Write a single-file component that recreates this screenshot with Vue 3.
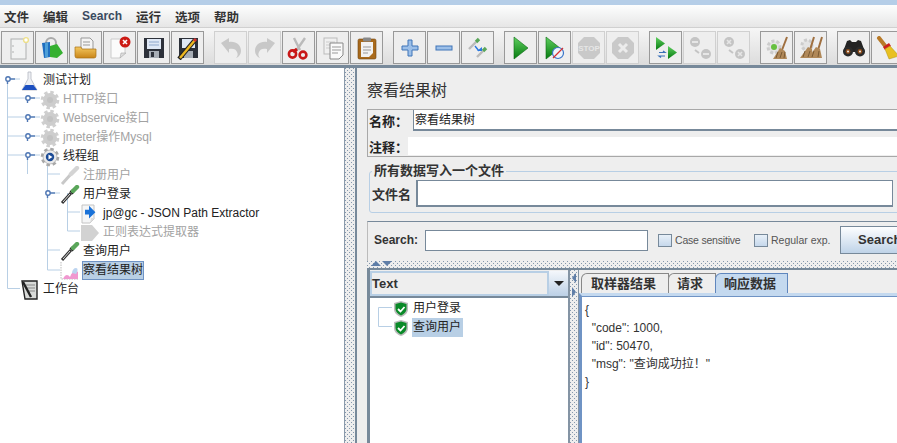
<script setup>
const menus = ['文件', '编辑', 'Search', '运行', '选项', '帮助']
const groups = [
  [['new'], ['templates'], ['open'], ['close'], ['save'], ['saveas']],
  [['undo', 1], ['redo', 1], ['cut'], ['copy'], ['paste']],
  [['plus'], ['minus'], ['toggle']],
  [['play'], ['playnt'], ['stop', 1], ['shut', 1]],
  [['rstart'], ['rstop', 1], ['rshut', 1]],
  [['clear'], ['clearall']],
  [['binoc'], ['broom']],
]
const rows = [
  { level: 0, icon: 'flask', text: '测试计划' },
  { level: 1, icon: 'gearoff', text: 'HTTP接口', off: true },
  { level: 1, icon: 'gearoff', text: 'Webservice接口', off: true },
  { level: 1, icon: 'gearoff', text: 'jmeter操作Mysql', off: true },
  { level: 1, icon: 'gear', text: '线程组' },
  { level: 2, icon: 'pipeoff', text: '注册用户', off: true },
  { level: 2, icon: 'pipe', text: '用户登录' },
  { level: 3, icon: 'extract', text: 'jp@gc - JSON Path Extractor' },
  { level: 3, icon: 'extoff', text: '正则表达式提取器', off: true },
  { level: 2, icon: 'pipe', text: '查询用户' },
  { level: 2, icon: 'graph', text: '察看结果树', sel: true },
  { level: 0, icon: 'bench', text: '工作台' },
]
const handles = [[8, 79], [28, 98], [28, 117], [28, 136], [28, 155], [48, 193]]
const lines = [
  'M7.5 79V288.5H20', 'M8 79H20',
  'M7.5 98H40', 'M7.5 117H40', 'M7.5 136H40', 'M7.5 155H40',
  'M27.5 155V174', 'M47.5 160V270H60', 'M47.5 174H60', 'M47.5 193H60', 'M47.5 250H60',
  'M67.5 193V231H80', 'M67.5 212H80',
]
</script>

<template>
  <div class="app">
    <svg class="defs" width="0" height="0">
      <defs>
        <linearGradient id="gGreen" x1="0" y1="0" x2="0" y2="1"><stop offset="0" stop-color="#5fd05f"/><stop offset="1" stop-color="#067a10"/></linearGradient>
        <linearGradient id="gFolder" x1="0" y1="0" x2="0" y2="1"><stop offset="0" stop-color="#f4c860"/><stop offset="1" stop-color="#c98518"/></linearGradient>
        <symbol id="new" viewBox="0 0 24 24"><rect x="5" y="3" width="15" height="20" fill="#f1f2f2" stroke="#aeb0b0"/><circle cx="20" cy="4" r="2.4" fill="#fff" stroke="#eee08a" stroke-width="1.4"/><circle cx="7" cy="10" r=".7" fill="#999"/><circle cx="7" cy="16" r=".7" fill="#999"/></symbol>
        <symbol id="templates" viewBox="0 0 24 24"><circle cx="11" cy="7" r="5" fill="none" stroke="#aaa" stroke-width="2"/><path d="M2 7l8-1v15l-6 1z" fill="#1f6fc0"/><path d="M10 10l7-2 6 9-6 5-7-1z" fill="#35b030"/><rect x="5" y="7" width="3" height="14" fill="#4fa0d8"/></symbol>
        <symbol id="open" viewBox="0 0 24 24"><path d="M7 2h9l3 3v11H7z" fill="#f4f4f4" stroke="#999"/><path d="M9 6h7M9 9h7" stroke="#999"/><path d="M1 11h6l1 2h14v7a2 2 0 0 1-2 2H3a2 2 0 0 1-2-2z" fill="url(#gFolder)" stroke="#a87015" stroke-width=".7"/></symbol>
        <symbol id="close" viewBox="0 0 24 24"><path d="M3 3h14v14l-5 5H3z" fill="#fbfbfb" stroke="#ccc"/><path d="M12 22l1-5h5z" fill="#ddd" stroke="#aaa" stroke-width=".6"/><circle cx="17" cy="6" r="5.5" fill="#cc1a14"/><path d="M15 4l4 4M19 4l-4 4" stroke="#fff" stroke-width="1.6"/></symbol>
        <symbol id="save" viewBox="0 0 24 24"><path d="M2 2h20v20H2z" fill="#2d313a"/><rect x="5" y="3" width="14" height="10" fill="#dfe8f5"/><path d="M7 6h10M7 9h10" stroke="#8fa8cc"/><rect x="7" y="15" width="10" height="7" fill="#a8aeb6"/><rect x="9" y="16" width="3" height="5" fill="#2d313a"/></symbol>
        <symbol id="saveas" viewBox="0 0 24 24"><path d="M3 2h19v20H3z" fill="#2d313a"/><rect x="6" y="3" width="13" height="9" fill="#dfe8f5"/><rect x="8" y="15" width="9" height="7" fill="#a8aeb6"/><path d="M3 23L19 4" stroke="#222" stroke-width="4.4"/><path d="M4 22L19 4" stroke="#eeb820" stroke-width="2.4"/><path d="M18 5l2-2" stroke="#d03030" stroke-width="3"/></symbol>
        <symbol id="undo" viewBox="0 0 24 24"><path d="M2 7l8-5v4c7-1 12 3 12 9 0 3-2 6-5 7 2-2 2-4 1-6-1-3-4-4-8-3v4z" fill="#c8c8c8"/></symbol>
        <symbol id="redo" viewBox="0 0 24 24"><path d="M22 7l-8-5v4C7 5 2 9 2 15c0 3 2 6 5 7-2-2-2-4-1-6 1-3 4-4 8-3v4z" fill="#c8c8c8"/></symbol>
        <symbol id="cut" viewBox="0 0 24 24"><path d="M7 2l6 12M18 2l-9 13" stroke="#bbb" stroke-width="2.4"/><path d="M10 13l-4 3" stroke="#c81818" stroke-width="3"/><circle cx="5.5" cy="18" r="3.6" fill="none" stroke="#c81818" stroke-width="2.6"/><circle cx="16" cy="19" r="3.4" fill="none" stroke="#c81818" stroke-width="2.6"/></symbol>
        <symbol id="copy" viewBox="0 0 24 24"><rect x="3" y="2" width="13" height="16" fill="#f0f0f0" stroke="#bbb"/><path d="M5 6h9M5 9h9M5 12h9" stroke="#ccc"/><path d="M9 7h13v12l-4 4H9z" fill="#fafafa" stroke="#888"/><path d="M11 11h9M11 14h9M11 17h6" stroke="#999"/></symbol>
        <symbol id="paste" viewBox="0 0 24 24"><rect x="3" y="3" width="18" height="20" rx="1.5" fill="#a96a1c" stroke="#704510" stroke-width=".6"/><path d="M6 6h12v11l-4 4H6z" fill="#f2f2f2"/><path d="M8 11h8M8 14h8M8 17h5" stroke="#999"/><rect x="8" y="1.5" width="8" height="4" rx="1" fill="#888"/></symbol>
        <symbol id="plus" viewBox="0 0 24 24"><path d="M10 4h4v6h6v4h-6v6h-4v-6H4v-4h6z" fill="#9cbfe8" stroke="#3f74b8"/></symbol>
        <symbol id="minus" viewBox="0 0 24 24"><rect x="4" y="10" width="16" height="4" fill="#9cbfe8" stroke="#3f74b8"/></symbol>
        <symbol id="toggle" viewBox="0 0 24 24"><path d="M3 13l7-7" stroke="#bbb" stroke-width="2.4"/><path d="M10 6l3-3" stroke="#5aa65a" stroke-width="3.4"/><path d="M11 21l6-6" stroke="#bbb" stroke-width="2.4"/><path d="M17 15l3-3" stroke="#5aa65a" stroke-width="3.4"/><path d="M9 10l4 5" stroke="#2a78e0" stroke-width="1.4"/><path d="M11 15h5v-4z" fill="#2a78e0"/></symbol>
        <symbol id="play" viewBox="0 0 24 24"><path d="M5 1l14 11L5 23z" fill="url(#gGreen)" stroke="#0a6a12" stroke-width=".6"/></symbol>
        <symbol id="playnt" viewBox="0 0 24 24"><path d="M3 1l14 11L3 23z" fill="url(#gGreen)" stroke="#0a6a12" stroke-width=".6"/><circle cx="15" cy="17" r="5.5" fill="#eef4fb" stroke="#3a74c8" stroke-width="1.2"/><path d="M10 22l10-10" stroke="#d83030" stroke-width="1.3"/></symbol>
        <symbol id="stop" viewBox="0 0 24 24"><path d="M7 1h10l6 6v10l-6 6H7l-6-6V7z" fill="#c9c9c9"/><text x="12" y="15" text-anchor="middle" font-size="8" font-weight="700" font-family="Liberation Sans" fill="#e6e6e6">STOP</text></symbol>
        <symbol id="shut" viewBox="0 0 24 24"><path d="M7 1h10l6 6v10l-6 6H7l-6-6V7z" fill="#c9c9c9"/><path d="M8 8l8 8M16 8l-8 8" stroke="#ececec" stroke-width="3"/></symbol>
        <symbol id="rstart" viewBox="0 0 24 24"><path d="M2 1l9 6.5L2 14z" fill="url(#gGreen)"/><path d="M14 10l9 6.5L14 23z" fill="url(#gGreen)"/><path d="M5 16.500h6l-2-1.500M11 20H5l2 1.500" fill="none" stroke="#3a70b8" stroke-width="1.200"/></symbol>
        <symbol id="rstop" viewBox="0 0 24 24"><circle cx="7" cy="6" r="5" fill="#c4c4c4"/><circle cx="18" cy="18" r="5" fill="#c4c4c4"/><path d="M4 6h6M15 18h6" stroke="#e6e6e6" stroke-width="2"/><path d="M7 14l4 3" stroke="#c4c4c4" stroke-width="2"/></symbol>
        <symbol id="rshut" viewBox="0 0 24 24"><circle cx="7" cy="6" r="5" fill="#c4c4c4"/><circle cx="18" cy="18" r="5" fill="#c4c4c4"/><path d="M5 4l4 4M9 4L5 8M16 16l4 4M20 16l-4 4" stroke="#e6e6e6" stroke-width="1.6"/><path d="M7 14l4 3" stroke="#c4c4c4" stroke-width="2"/></symbol>
        <symbol id="clear" viewBox="0 0 24 24"><circle cx="9" cy="11" r="6" fill="#e4e4e4" stroke="#ccc" stroke-width="3" stroke-dasharray="3 2"/><circle cx="9" cy="11" r="3" fill="#66c040"/><path d="M22 1l-5 13" stroke="#a07040" stroke-width="2"/><path d="M15 12l5 3 2 8H8z" fill="#b08858"/><path d="M13 16l-2 6M17 16l-2 6M20 16l-1 6" stroke="#7a5a34"/></symbol>
        <symbol id="clearall" viewBox="0 0 24 24"><circle cx="8" cy="9" r="5" fill="#e4e4e4" stroke="#ccc" stroke-width="3" stroke-dasharray="3 2"/><path d="M15 1l-4 13M23 1l-4 13" stroke="#a07040" stroke-width="2"/><path d="M9 11l4 2 1 9H1z" fill="#b08858"/><path d="M17 11l4 2 2 9H9z" fill="#b08858"/><path d="M6 15l-2 6M11 15l-2 6M15 15l-2 6M20 15l-1 6" stroke="#7a5a34"/></symbol>
        <symbol id="binoc" viewBox="0 0 24 24"><path d="M5 5l3-1 2 2h4l2-2 3 1 4 11H1z" fill="#232323"/><circle cx="6" cy="15.500" r="5" fill="#2a2a2a"/><circle cx="18" cy="15.500" r="5" fill="#2a2a2a"/><circle cx="6" cy="15.500" r="2.400" fill="#8a4a18"/><circle cx="18" cy="15.500" r="2.400" fill="#8a4a18"/><circle cx="6" cy="15.500" r="1" fill="#eee"/><circle cx="18" cy="15.500" r="1" fill="#eee"/></symbol>
        <symbol id="broom" viewBox="0 0 24 24"><path d="M3 2l7 9" stroke="#b87a28" stroke-width="4" stroke-linecap="round"/><path d="M7 11l6-4 2 3-6 4z" fill="#cc2020"/><path d="M9 13l5-3 9 10-10 3z" fill="#e8c020" stroke="#b09010" stroke-width=".5"/></symbol>
        <symbol id="flask" viewBox="0 0 20 20"><path d="M8 1h3v7l6 11H2l6-11z" fill="#eef0f4" stroke="#b4b8c2" stroke-width=".8"/><path d="M5.500 14h8l3.500 5H2z" fill="#1c4fc0"/></symbol>
        <symbol id="gearoff" viewBox="0 0 20 20"><circle cx="10" cy="10" r="7.800" fill="none" stroke="#cfcfcf" stroke-width="3" stroke-dasharray="3.400 2.730"/><circle cx="10" cy="10" r="7" fill="#cdcdcd"/><circle cx="10" cy="10" r="3" fill="#c2c2c2"/></symbol>
        <symbol id="gear" viewBox="0 0 20 20"><circle cx="10" cy="10" r="7.800" fill="none" stroke="#a8a8a8" stroke-width="3" stroke-dasharray="3.400 2.730"/><circle cx="10" cy="10" r="7" fill="#eaeaea" stroke="#999" stroke-width=".6"/><circle cx="10" cy="10" r="4.200" fill="#1d4c96"/><path d="M8.500 7.500l4 2.500-4 2.500z" fill="#fff"/></symbol>
        <symbol id="pipe" viewBox="0 0 20 20"><path d="M2 18l9-10" stroke="#333" stroke-width="3"/><path d="M3 17l7-8" stroke="#ddd" stroke-width="1"/><path d="M11 8l2-2" stroke="#222" stroke-width="4"/><path d="M13 6l4-4" stroke="#5aa65a" stroke-width="4.400" stroke-linecap="round"/></symbol>
        <symbol id="pipeoff" viewBox="0 0 20 20"><path d="M2 18l9-10" stroke="#c8c8c8" stroke-width="3"/><path d="M11 8l6-6" stroke="#d4d4d4" stroke-width="4.400" stroke-linecap="round"/></symbol>
        <symbol id="extract" viewBox="0 0 20 20"><path d="M2 1h12v14l-4 4H2z" fill="#f5f6f7" stroke="#c4c4c4"/><path d="M10 19l1-5h4z" fill="#ddd"/><path d="M10 1l8 8-8 8v-5H5V6h5z" fill="#1a72d8" transform="translate(1 1) scale(.8)"/></symbol>
        <symbol id="extoff" viewBox="0 0 20 20"><path d="M1 2h11l7 8-7 8H1z" fill="#d2d2d2"/></symbol>
        <symbol id="graph" viewBox="0 0 20 20"><path d="M1 1v17h18" fill="none" stroke="#bbb" stroke-dasharray="1.500 1"/><path d="M3 18c2-5 5-5 7-2 2-6 6-7 8-5v7z" fill="#f098d0"/><path d="M12 12c0-3 2-5 4-5s2 3 0 6z" fill="#bcd4f0"/></symbol>
        <symbol id="bench" viewBox="0 0 20 20"><path d="M2 1h15v18H5z" fill="#d8dad8" stroke="#222" stroke-width="1.400"/><path d="M6 5h9M7 8h8M7 11h8" stroke="#888"/><path d="M3 2l8 15" stroke="#222" stroke-width="2.400"/></symbol>
        <symbol id="shield" viewBox="0 0 16 16"><path d="M8 0l7 2v6c0 4-3 6.500-7 8-4-1.500-7-4-7-8V2z" fill="#bbb"/><path d="M8 1.500l5.500 1.500v5c0 3-2.500 5-5.500 6.500C5 13 2.500 11 2.500 8V3z" fill="#0a8a28"/><path d="M5 8l2.500 2.500L11.500 6" fill="none" stroke="#fff" stroke-width="1.800"/></symbol>
      </defs>
    </svg>

    <div class="strip"></div>
    <div class="menu"><span v-for="m in menus" :key="m" :class="{ latin: m === 'Search' }">{{ m }}</span></div>
    <div class="toolbar">
      <div v-for="(g, i) in groups" :key="i" class="group">
        <div v-for="b in g" :key="b[0]" class="tbtn" :class="{ dis: b[1] }">
          <svg width="24" height="24"><use :href="'#' + b[0]" /></svg>
        </div>
      </div>
    </div>
    <div class="rule"></div>

    <div class="main">
      <div class="tree">
        <svg class="tree-lines" width="120" height="375" viewBox="0 68 120 375">
          <path v-for="(l, i) in lines" :key="i" :d="l" fill="none" stroke="#b8cfe5" />
          <g v-for="(h, i) in handles" :key="'h' + i">
            <path :d="`M${h[0]} ${h[1]}H${h[0] + 7}`" stroke="#4f77b4" stroke-width="1.400" />
            <path :d="`M${h[0] - 0.5} ${h[1]}V${h[1] + 5}`" stroke="#4f77b4" stroke-width="1.400" />
            <circle :cx="h[0]" :cy="h[1]" r="2.200" fill="#fff" stroke="#4f77b4" stroke-width="1.400" />
          </g>
        </svg>
        <div class="rows">
          <div v-for="r in rows" :key="r.text" class="row" :class="'lv' + r.level">
            <svg width="20" height="20"><use :href="'#' + r.icon" /></svg>
            <span class="label" :class="{ off: r.off, sel: r.sel }">{{ r.text }}</span>
          </div>
        </div>
      </div>

      <div class="vsplit dots"></div>

      <div class="right">
        <div class="title">察看结果树</div>
        <div class="namebox">
          <div class="nrow first"><b>名称：</b><div class="field">察看结果树</div></div>
          <div class="nrow second"><b>注释：</b><div class="plain"></div></div>
        </div>
        <fieldset class="fs">
          <legend>所有数据写入一个文件</legend>
          <b>文件名</b><div class="fileinput"></div>
        </fieldset>
        <div class="search">
          <b class="slabel">Search:</b>
          <div class="sinput"></div>
          <span class="cb"></span><span class="cbt c1">Case sensitive</span>
          <span class="cb"></span><span class="cbt c2">Regular exp.</span>
          <div class="sbtn">Search</div>
        </div>
        <div class="hsplit dots">
          <i class="tri up"></i><i class="tri down"></i>
        </div>
        <div class="bottom">
          <div class="left">
            <div class="combo"><div class="ctext">Text</div><div class="cbtn"><i></i></div></div>
            <div class="restree">
              <svg class="res-lines" width="20" height="40"><path d="M.5 6.500H14M.5 6.500V25.500H14" fill="none" stroke="#b8cfe5" /></svg>
              <div class="rrow"><svg width="16" height="16"><use href="#shield" /></svg><span>用户登录</span></div>
              <div class="rrow"><svg width="16" height="16"><use href="#shield" /></svg><span class="rsel">查询用户</span></div>
            </div>
          </div>
          <div class="vs2 dots"><i class="ltri"></i><i class="rtri"></i></div>
          <div class="tabs-wrap">
            <div class="tabs">
              <div class="tab t1">取样器结果</div>
              <div class="tab t2">请求</div>
              <div class="tab act">响应数据</div>
            </div>
            <div class="content">
              <div>{</div>
              <div>&nbsp;&nbsp;"code": 1000,</div>
              <div>&nbsp;&nbsp;"id": 50470,</div>
              <div>&nbsp;&nbsp;"msg": "查询成功拉！"</div>
              <div>}</div>
            </div>
          </div>
        </div>
      </div>
    </div>
  </div>
</template>

<style>
html, body { margin: 0; overflow: hidden; background: #fff; }
</style>

<style scoped>
.app { width: 897px; height: 443px; overflow: hidden; display: flex; flex-direction: column; font-family: "Liberation Sans", "Noto Sans CJK SC", sans-serif; color: #222; }
.defs { position: absolute; }
.strip { height: 5px; background: #b5cee8; flex: none; }
.menu { height: 23px; flex: none; display: flex; align-items: center; gap: 14px; padding-left: 4px; background: linear-gradient(#fdfefe, #e6e6e6); font-size: 12.500px; font-weight: 700; color: #333; border-bottom: 1px solid #d0d0d0; box-sizing: border-box; }
.menu .latin { font-size: 12px; color: #3a4a60; }
.toolbar { height: 37px; flex: none; box-sizing: border-box; padding: 3px 0 0 1px; display: flex; gap: 10px; background: linear-gradient(#f6f6f6, #dcdcdc); }
.group { display: flex; gap: 1px; }
.tbtn { width: 31px; height: 31px; border: 1px solid #999; background: #eee; display: flex; align-items: center; justify-content: center; flex: none; }
.tbtn.dis { border-color: #d0d0d0; }
.rule { height: 3px; flex: none; background: #77899a; }
.main { flex: 1; display: flex; min-height: 0; }
.tree { width: 344px; flex: none; position: relative; background: #fff; }
.tree-lines { position: absolute; left: 0; top: 0; }
.rows { position: relative; padding-top: 3px; }
.row { height: 19px; display: flex; align-items: center; gap: 3px; font-size: 12px; white-space: nowrap; color: #222; }
.lv0 { padding-left: 20px; }
.lv1 { padding-left: 40px; }
.lv2 { padding-left: 60px; }
.lv3 { padding-left: 80px; }
.label { line-height: 17px; }
.label.off { color: #a2a2a2; }
.label.sel { background: #b8cfe5; outline: 1px solid #6f93c4; }
.dots { background-color: #eeeeee; background-image: radial-gradient(circle at .5px .5px, #8598ad .7px, transparent .7px), radial-gradient(circle at .5px .5px, #8598ad .7px, transparent .7px); background-size: 4px 4px; background-position: 0 0, 2px 2px; }
.vsplit { width: 10px; flex: none; border-left: 1px solid #8a9aab; border-right: 2px solid #77899a; background-clip: padding-box; }
.right { flex: 1; min-width: 0; overflow: hidden; background: #eee; padding-left: 10px; display: flex; flex-direction: column; }
.title { height: 41px; flex: none; box-sizing: border-box; padding-top: 12px; font-size: 16px; line-height: 22px; color: #333; }
.namebox { width: 540px; height: 48px; flex: none; box-sizing: border-box; border: 1px solid #a8a8a8; }
.namebox b { font-size: 13px; color: #222; white-space: nowrap; }
.nrow { display: flex; align-items: center; padding-left: 1px; }
.nrow b { width: 43px; flex: none; }
.nrow.first { height: 21px; margin-top: 0; }
.field { flex: 1; height: 21px; margin-left: 1px; box-sizing: border-box; background: #fff; border-left: 1px solid #77899a; border-bottom: 2px solid #77899a; font-size: 12px; line-height: 20px; padding-left: 1px; }
.nrow.second { height: 18px; margin-top: 6px; }
.nrow.second b { width: 39px; }
.plain { flex: 1; height: 18px; background: #fff; }
.fs { width: 540px; height: 50px; flex: none; box-sizing: border-box; margin: 6px 0 0 2px; padding: 0 0 0 2px; border: 1px solid #b8cfe5; border-radius: 3px 0 0 3px; display: flex; align-items: center; gap: 5px; min-width: 0; }
.fs legend { font-size: 13px; font-weight: 700; padding: 0 2px; margin-left: 0; color: #333; line-height: 17px; position: relative; top: -1px; }
.fs b { font-size: 13px; color: #333; white-space: nowrap; }
.fileinput { width: 477px; height: 27px; box-sizing: border-box; background: #fff; border: 1px solid #77899a; border-width: 1px 1px 2px 2px; }
.search { width: 540px; height: 40px; flex: none; box-sizing: border-box; margin-top: 8px; padding: 0 0 3px 6px; border-top: 1px solid #77899a; border-left: 1px solid #bbb; display: flex; align-items: center; font-size: 10.500px; color: #555; white-space: nowrap; }
.slabel { font-size: 12px; color: #333; width: 51px; flex: none; }
.sinput { width: 223px; height: 21px; flex: none; box-sizing: border-box; background: #fff; border: 1px solid #77899a; margin-right: 10px; }
.cb { width: 14px; height: 13px; flex: none; box-sizing: border-box; border: 1px solid #77899a; background: linear-gradient(#e8f0f8, #c6d8ec); margin-right: 3px; }
.cbt { flex: none; overflow: visible; }
.cbt.c1 { width: 66px; margin-right: 13px; letter-spacing: -.2px; }
.cbt.c2 { width: 59px; margin-right: 10px; }
.sbtn { width: 70px; height: 28px; flex: none; box-sizing: border-box; border: 1px solid #77899a; background: linear-gradient(#fdfeff, #bfd3e8); font-size: 13px; font-weight: 700; color: #333; line-height: 26px; padding-left: 17px; }
.hsplit { height: 7px; flex: none; display: flex; gap: 1px; align-items: flex-start; padding-left: 4px; background-color: #eee; }
.tri { width: 0; height: 0; border-left: 5px solid transparent; border-right: 5px solid transparent; }
.tri.up { border-bottom: 5px solid #5f7ea8; }
.tri.down { border-top: 5px solid #5f7ea8; }
.bottom { flex: 1; min-height: 0; display: flex; border-top: 2px solid #77899a; }
.left { width: 198px; flex: none; border-left: 3px solid #77899a; border-right: 2px solid #8494a4; background: #fff; display: flex; flex-direction: column; }
.combo { height: 28px; flex: none; box-sizing: border-box; display: flex; background: #eee; padding-top: 1px; border-bottom: 2px solid #77899a; }
.ctext { width: 179px; box-sizing: border-box; border: 2px solid #b8cfe5; font-size: 13px; font-weight: 700; line-height: 21px; padding-left: 0; color: #333; }
.cbtn { flex: 1; background: linear-gradient(#f4f7fb, #bcd0e6); display: flex; align-items: center; justify-content: center; }
.cbtn i { width: 0; height: 0; border-left: 5px solid transparent; border-right: 5px solid transparent; border-top: 5px solid #222; }
.restree { position: relative; padding: 1px 0 0 23px; }
.res-lines { position: absolute; left: 8px; top: 3px; }
.rrow { height: 19px; display: flex; align-items: center; gap: 3px; font-size: 12px; position: relative; }
.rrow span { padding: 0 2px 0 1px; line-height: 19px; }
.rsel { background: #b8cfe5; }
.vs2 { width: 8px; flex: none; display: flex; flex-direction: column; align-items: center; gap: 4px; padding-top: 3px; border-right: 1px solid #8494a4; }
.ltri { width: 0; height: 0; border-top: 5px solid transparent; border-bottom: 5px solid transparent; border-right: 4px solid #5f7ea8; }
.rtri { width: 0; height: 0; border-top: 5px solid transparent; border-bottom: 5px solid transparent; border-left: 4px solid #5f7ea8; }
.tabs-wrap { flex: 1; min-width: 0; display: flex; flex-direction: column; background: #eee; }
.tabs { height: 23px; flex: none; display: flex; align-items: flex-end; padding-left: 2px; }
.tab { height: 20px; box-sizing: border-box; border: 1px solid #888; border-bottom: 0; border-radius: 6px 0 0 0; margin-right: -1px; font-size: 13px; font-weight: 700; line-height: 19px; color: #333; background: #eee; }
.tab.t1 { width: 88px; padding-left: 9px; }
.tab.t2 { width: 48px; padding-left: 8px; }
.tab.act { width: 73px; background: #c4d9ef; border-color: #5f86bd; padding-left: 8px; }
.content { flex: 1; background: #fff; border-top: 3px solid #c4d9ef; border-left: 3px solid #6f93c4; box-shadow: inset 0 1px 0 #6f93c4; padding: 5px 0 0 3px; font-size: 12px; line-height: 18px; color: #333; white-space: nowrap; }
</style>
